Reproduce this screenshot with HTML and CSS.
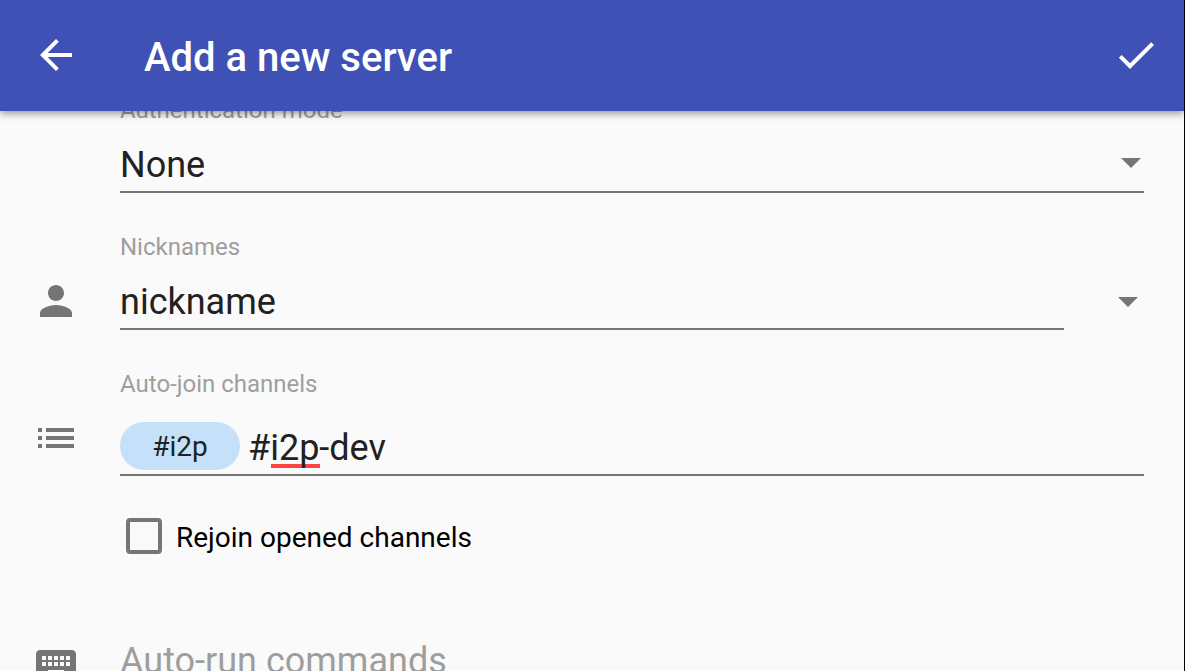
FILE: index.html
```html
<!DOCTYPE html>
<html lang="en">
<head>
    <meta charset="UTF-8">
    <meta name="viewport" content="width=device-width, initial-scale=1.0">
    <title>Add a new server</title>
    <link rel="stylesheet" href="styles.css">
</head>
<body>
    <header class="toolbar">
        <button type="button" class="iconBtn" aria-label="Back">
            <svg class="icon" viewBox="0 0 24 24"><path d="M20 11H7.83l5.59-5.59L12 4l-8 8 8 8 1.41-1.41L7.83 13H20v-2z"/></svg>
        </button>
        <h1 class="title">Add a new server</h1>
        <button type="submit" form="serverForm" class="iconBtn" aria-label="Save">
            <svg class="icon" viewBox="0 0 24 24"><path d="M9 16.17L4.83 12l-1.42 1.41L9 19 21 7l-1.41-1.41z"/></svg>
        </button>
    </header>

    <form id="serverForm" class="form">
        <div class="row">
            <div class="field">
                <label class="label" for="authMode">Authentication mode</label>
                <div class="selectWrap">
                    <select id="authMode" class="input">
                        <option>None</option>
                        <option>Password</option>
                    </select>
                    <svg class="arrow selectArrow" viewBox="0 0 20 10"><path d="M0 0l10 10L20 0z"/></svg>
                </div>
            </div>
        </div>

        <div class="row rowWithButton">
            <svg class="icon rowIcon" viewBox="0 0 24 24"><path d="M12 12c2.21 0 4-1.79 4-4s-1.79-4-4-4-4 1.79-4 4 1.79 4 4 4zm0 2c-2.67 0-8 1.34-8 4v2h16v-2c0-2.66-5.33-4-8-4z"/></svg>
            <div class="field">
                <label class="label" for="nick">Nicknames</label>
                <input type="text" id="nick" class="input" value="nickname" spellcheck="false">
            </div>
            <button type="button" class="iconBtn expandBtn" aria-label="More nicknames">
                <svg class="arrow" viewBox="0 0 20 10"><path d="M0 0l10 10L20 0z"/></svg>
            </button>
        </div>

        <div class="row">
            <svg class="icon rowIcon" viewBox="0 0 24 24"><path d="M3 13h2v-2H3v2zm0 4h2v-2H3v2zm0-8h2V7H3v2zm4 4h14v-2H7v2zm0 4h14v-2H7v2zM7 7v2h14V7H7z"/></svg>
            <div class="field">
                <label class="label labelChips" for="channels">Auto-join channels</label>
                <div class="chipBox">
                    <span class="chip">#i2p</span>
                    <div class="chipEntry">
                        <span class="misspelled"></span>
                        <input type="text" id="channels" class="chipInput" value="#i2p-dev" spellcheck="false">
                    </div>
                </div>
            </div>
        </div>

        <div class="row">
            <label class="checkLabel"><input type="checkbox" class="checkbox"><span class="checkText">Rejoin opened channels</span></label>
        </div>

        <div class="row commandsRow">
            <svg class="icon" viewBox="0 0 24 24"><path d="M20 5H4c-1.100 0-1.990.9-1.990 2L2 17c0 1.100.9 2 2 2h16c1.100 0 2-.9 2-2V7c0-1.100-.9-2-2-2zm-9 3h2v2h-2V8zm0 3h2v2h-2v-2zM8 8h2v2H8V8zm0 3h2v2H8v-2zm-1 2H5v-2h2v2zm0-3H5V8h2v2zm9 7H8v-2h8v2zm0-4h-2v-2h2v2zm0-3h-2V8h2v2zm3 3h-2v-2h2v2zm0-3h-2V8h2v2z"/></svg>
            <div class="field">
                <input type="text" class="input" placeholder="Auto-run commands" aria-label="Auto-run commands">
            </div>
        </div>
    </form>
</body>
</html>
```
FILE: styles.css
```css
* {
    box-sizing: border-box;
}

body {
    margin: 0;
    height: 100vh;
    overflow: hidden;
    background-color: #fafafa;
    border-right: 1px solid #000;
    font-family: Roboto, sans-serif;
    color: #212121;
}

/* Top bar, stays above the scrolled form */
.toolbar {
    position: relative;
    z-index: 1;
    display: flex;
    align-items: center;
    gap: 64px;
    padding: 31px 24px 32px 32px;
    background-color: #3f51b5;
    color: #fff;
    box-shadow: 0 2px 8px rgba(0, 0, 0, 0.45);
}

.title {
    flex: 1;
    margin: 0;
    padding-top: 6px;
    font-size: 40px;
    line-height: 42px;
    font-weight: 500;
}

.icon {
    display: block;
    flex: none;
    width: 48px;
    height: 48px;
    fill: currentColor;
}

.iconBtn {
    display: flex;
    align-items: center;
    justify-content: center;
    flex: none;
    width: 48px;
    height: 48px;
    padding: 0;
    border: none;
    background: none;
    color: inherit;
    cursor: pointer;
}

/* The form is scrolled a little way under the toolbar */
.form {
    margin-top: -15px;
}

.row {
    display: flex;
    padding: 0 40px 40px 120px;
    color: #757575;
}

.rowIcon {
    margin: 44px 0 0 -88px;
}

.rowIcon + .field {
    margin-left: 40px;
}

.rowWithButton {
    padding-right: 32px;
}

.field {
    flex: 1;
    min-width: 0;
}

.label {
    display: block;
    margin-bottom: 20px;
    font-size: 24px;
    line-height: 28px;
    color: #9e9e9e;
}

.labelChips {
    margin-bottom: 24px;
}

.input {
    display: block;
    width: 100%;
    height: 49px;
    margin: 0;
    padding: 0 0 5px;
    border: none;
    border-bottom: 2px solid #757575;
    border-radius: 0;
    outline: none;
    background: none;
    appearance: none;
    font-family: inherit;
    font-size: 36px;
    line-height: 42px;
    color: #212121;
}

.input::placeholder {
    color: #9e9e9e;
}

.selectWrap {
    position: relative;
}

.arrow {
    display: block;
    width: 20px;
    height: 10px;
    fill: #757575;
}

.selectArrow {
    position: absolute;
    right: 3px;
    bottom: 25px;
    pointer-events: none;
}

.expandBtn {
    margin: 45px 0 0 40px;
}

/* Channel chips */
.chipBox {
    display: flex;
    gap: 8px;
    padding-bottom: 4px;
    border-bottom: 2px solid #757575;
}

.chip {
    width: 120px;
    height: 48px;
    border-radius: 24px;
    background-color: #c5e1f9;
    color: #212121;
    font-size: 28px;
    line-height: 50px;
    text-align: center;
}

.chipEntry {
    position: relative;
    flex: 1;
}

.chipInput {
    position: relative;
    display: block;
    width: 100%;
    height: 48px;
    padding: 4px 0 0;
    border: none;
    outline: none;
    background: none;
    font-family: inherit;
    font-size: 36px;
    color: #212121;
}

/* Spell check mark under the word */
.misspelled {
    position: absolute;
    left: 23px;
    bottom: 2px;
    width: 49px;
    height: 4px;
    background-color: #ff4444;
}

.checkLabel {
    display: flex;
    align-items: center;
    gap: 14px;
    padding-left: 6px;
    font-size: 28px;
    line-height: 36px;
    color: #000;
}

.checkText {
    padding-top: 4px;
}

.checkbox {
    width: 36px;
    height: 36px;
    margin: 0;
    border: 4px solid #757575;
    border-radius: 4px;
    appearance: none;
}

.checkbox:checked {
    background-color: #757575;
}

.commandsRow {
    gap: 40px;
    padding: 44px 40px 0 32px;
}
```
